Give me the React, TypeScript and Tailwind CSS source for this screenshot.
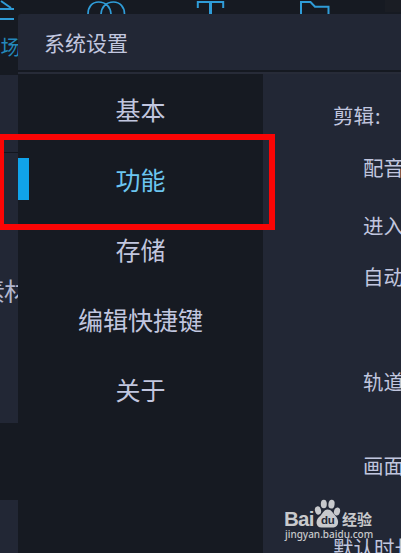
import React from "react";

const menu = ["基本", "功能", "存储", "编辑快捷键", "关于"];

function BackgroundApp() {
  return (
    <div className="flex h-full w-full flex-col bg-[#161a22]">
      <div className="relative h-[75px] shrink-0 bg-[#161a22]">
        <svg width="401" height="20" viewBox="0 0 401 20" fill="none" stroke="#2f9cd8" className="block">
          <path d="M0 9H14M0 19H14" strokeWidth="2" />
          <path d="M1 1L11 8" strokeWidth="2" />
          <path d="M88 14C88 7 92 2 98.500 2C106 2 110.500 7 111 14M101 14C101.500 7 106 2 113.500 2C120 2 124.500 7 124.500 14" strokeWidth="1.700" />
          <path d="M197.800 8V2H223.200V8" strokeWidth="2" />
          <path d="M210.500 2V18" strokeWidth="3" />
          <path d="M301 18V2H310.500L315 6.800H328.500V18" strokeWidth="2" />
        </svg>
        <div className="absolute right-0 top-0 h-3 w-4 bg-[#1a1d24]" />
        <span className="absolute -left-[20px] top-[33px] whitespace-nowrap text-[20.500px] leading-[26px] text-[#2488bb]">转场</span>
      </div>
      <div className="h-[77px] shrink-0 bg-[#222735]" />
      <div className="h-[1px] shrink-0 bg-[#12161e]" />
      <div className="relative h-[270px] shrink-0 bg-[#222735]">
        <span className="absolute -left-[20px] top-[121px] whitespace-nowrap text-[25px] leading-[32px] tracking-[-1px] text-[#b3b7ce]">素材</span>
      </div>
      <div className="h-[77px] shrink-0 bg-[#161a22]" />
      <div className="flex-1 bg-[#222735]" />
    </div>
  );
}

function Watermark() {
  return (
    <div className="absolute left-[284px] top-[499px] h-[43px] w-[90px] text-[#c8c9cc]">
      <svg width="90" height="30" viewBox="0 0 90 30" fill="currentColor" className="absolute left-0 top-0">
        <ellipse cx="34" cy="11.500" rx="3" ry="4.200" transform="rotate(-15 34 11.500)" />
        <ellipse cx="39.800" cy="5" rx="3" ry="4.300" />
        <ellipse cx="47.500" cy="5.200" rx="3.100" ry="4.400" transform="rotate(8 47.500 5.200)" />
        <ellipse cx="53" cy="12.500" rx="3" ry="4.100" transform="rotate(15 53 12.500)" />
        <path d="M43.500 10.500C47.500 10.500 49 14 51.500 17C55.500 21 55 28 49.500 28.500H37.500C32 28.500 31 22 35 18C38.500 15.500 39.500 10.500 43.500 10.500Z" />
      </svg>
      <span className="absolute left-0 top-[10px] font-['Liberation_Sans'] text-[20.500px] font-bold leading-[19px] tracking-[-0.700px]">Bai</span>
      <span className="absolute left-[37px] top-[14px] font-['Liberation_Sans'] text-[11.500px] font-bold leading-[14px] tracking-[-0.300px] text-[#222735]">du</span>
      <span className="absolute left-[58px] top-[10px] whitespace-nowrap text-[15px] font-bold leading-[20px]">经验</span>
      <span className="absolute left-[1px] top-[29px] whitespace-nowrap font-['Noto_Sans'] text-[10px] font-medium leading-[13px]">jingyan.baidu.com</span>
    </div>
  );
}

function SettingsDialog() {
  return (
    <div className="absolute left-[18px] top-[14px] flex h-[539px] w-[383px] flex-col overflow-hidden rounded-tl-[3px] bg-[#222735] text-[#c1c6df]">
      <header className="flex h-[56px] shrink-0 items-center pb-px pl-[26px] pt-px text-[21px] leading-none">系统设置</header>
      <div className="h-[2px] shrink-0 bg-[#151921]" />
      <div className="h-[2px] shrink-0 bg-[#272b38]" />
      <div className="flex min-h-0 flex-1">
        <nav className="flex w-[245px] shrink-0 flex-col bg-[#161a22] text-[25px]">
          {menu.map((item) => (
            <div
              key={item}
              className={`relative flex h-[70px] shrink-0 items-center justify-center ${item === "功能" ? "text-[#6cc5f0]" : ""}`}
            >
              {item === "功能" && <i className="absolute left-0 top-[14px] h-[42px] w-[11px] bg-[#10a3ea]" />}
              <span className="leading-[36px]">{item}</span>
            </div>
          ))}
        </nav>
        <section className="flex flex-1 flex-col overflow-hidden whitespace-nowrap pl-[70px] pt-[26px] text-[20.500px] leading-[30px]">
          <div>剪辑<span className="ml-px font-['Noto_Sans']">:</span></div>
          <div className="ml-[30px] mt-[21px]">配音</div>
          <div className="ml-[30px] mt-[28px]">进入</div>
          <div className="ml-[30px] mt-[21px]">自动</div>
          <div className="ml-[30px] mt-[75px]">轨道</div>
          <div className="ml-[30px] mt-[54px]">画面</div>
          <div className="mt-[52px]">默认时长</div>
        </section>
      </div>
    </div>
  );
}

export default function App() {
  return (
    <main className="relative h-[553px] w-[401px] overflow-hidden font-['Noto_Sans_CJK_SC',sans-serif] font-normal">
      <BackgroundApp />
      <SettingsDialog />
      <div className="absolute -left-[2px] top-[134px] h-[96px] w-[277px] border-6 border-[#fb0505]" />
      <Watermark />
    </main>
  );
}
